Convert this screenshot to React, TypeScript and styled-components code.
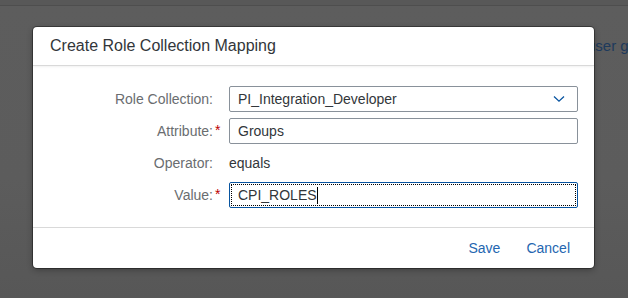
import { createGlobalStyle, styled } from "styled-components"

const GlobalStyle = createGlobalStyle`
	html, body {
		margin: 0;
		padding: 0;
		width: 628px;
		height: 298px;
		overflow: hidden;
		font-family: "Liberation Sans", Arial, sans-serif;
	}
`

type Row = {
	label: string,
	required?: boolean,
	kind: "select" | "input" | "text",
	value: string,
	focused?: boolean
}

const rows: Row[] = [
	{ label: "Role Collection:", kind: "select", value: "PI_Integration_Developer" },
	{ label: "Attribute:", required: true, kind: "input", value: "Groups" },
	{ label: "Operator:", kind: "text", value: "equals" },
	{ label: "Value:", required: true, kind: "input", value: "CPI_ROLES", focused: true },
]

function Chevron() {
	return (
		<svg width="12" height="8" viewBox="0 0 12 8">
			<path d="M1 1.5 L6 6.2 L11 1.5" fill="none" stroke="#0854a0" strokeWidth="1.3" />
		</svg>
	)
}

function App() {
	return (
		<>
			<GlobalStyle />
			<Backdrop>
				<TopBar />
				<BehindLink>user g</BehindLink>
				<Dialog>
					<Header>Create Role Collection Mapping</Header>
					<Form>
						{rows.map(row => (
							<FormRow key={row.label}>
								<Label>
									{row.label}
									<Star>{row.required ? "*" : ""}</Star>
								</Label>
								{row.kind === "text" && <PlainValue>{row.value}</PlainValue>}
								{row.kind === "input" && (
									<Field $focused={row.focused}>
										{row.value}
										{row.focused && <Caret />}
									</Field>
								)}
								{row.kind === "select" && (
									<Field>
										{row.value}
										<ArrowSlot><Chevron /></ArrowSlot>
									</Field>
								)}
							</FormRow>
						))}
					</Form>
					<Footer>
						<TextButton>Save</TextButton>
						<TextButton>Cancel</TextButton>
					</Footer>
				</Dialog>
			</Backdrop>
		</>
	)
}

const Backdrop = styled.div`
	position: relative;
	width: 628px;
	height: 298px;
	background: linear-gradient(180deg, #5d5d5d 0%, #5c5c5c 60%, #575757 100%);
`

const TopBar = styled.div`
	height: 5px;
	background: #585858;
	border-bottom: 1px solid #4e4e4e;
`

const BehindLink = styled.div`
	position: absolute;
	left: 587px;
	top: 37px;
	font-size: 15px;
	color: #1e3a5c;
	white-space: nowrap;
`

const Dialog = styled.div`
	position: absolute;
	left: 33px;
	top: 27px;
	width: 561px;
	background: #ffffff;
	border-radius: 4px;
	box-shadow: 0 0 0 1px rgba(0, 0, 0, 0.35), 0 2px 6px rgba(0, 0, 0, 0.3);
	display: flex;
	flex-direction: column;
	overflow: hidden;
`

const Header = styled.div`
	height: 38px;
	padding: 0 17px;
	display: flex;
	align-items: center;
	font-size: 16px;
	color: #32363a;
	border-bottom: 1px solid #d9d9d9;
	box-shadow: 0 1px 2px rgba(0, 0, 0, 0.06);
`

const Form = styled.div`
	display: flex;
	flex-direction: column;
	gap: 6px;
	padding: 20px 16px 19px 0;
`

const FormRow = styled.div`
	display: grid;
	grid-template-columns: 189px 349px;
	column-gap: 7px;
	height: 26px;
	align-items: center;
`

const Label = styled.div`
	display: flex;
	justify-content: flex-end;
	align-items: center;
	font-size: 14px;
	color: #6a6d70;
	white-space: nowrap;
`

const Star = styled.span`
	width: 9px;
	padding-left: 2px;
	box-sizing: border-box;
	color: #bb0000;
	font-size: 14px;
	align-self: flex-start;
	margin-top: -1px;
`

const PlainValue = styled.div`
	font-size: 14px;
	color: #32363a;
`

const Field = styled.div<{ $focused?: boolean }>`
	position: relative;
	box-sizing: border-box;
	height: 26px;
	padding: 0 8px;
	display: flex;
	align-items: center;
	border: 1px solid ${({ $focused }) => ($focused ? "#0854a0" : "#89919a")};
	border-radius: 2px;
	background: #ffffff;
	font-size: 14px;
	color: #32363a;
	outline: ${({ $focused }) => ($focused ? "1px dotted #000000" : "none")};
	outline-offset: -3px;
`

const Caret = styled.span`
	display: inline-block;
	width: 1px;
	height: 17px;
	margin-left: 0;
	background: #000000;
`

const ArrowSlot = styled.span`
	margin-left: auto;
	margin-right: 4px;
	display: flex;
	align-items: center;
`

const Footer = styled.div`
	height: 40px;
	border-top: 1px solid #d9d9d9;
	display: flex;
	justify-content: flex-end;
	align-items: center;
	gap: 10px;
	padding: 0 16px;
`

const TextButton = styled.button`
	border: none;
	background: transparent;
	padding: 0 8px;
	height: 26px;
	font-family: "Liberation Sans", Arial, sans-serif;
	font-size: 14px;
	color: #2466b0;
	cursor: pointer;
`

export default App
